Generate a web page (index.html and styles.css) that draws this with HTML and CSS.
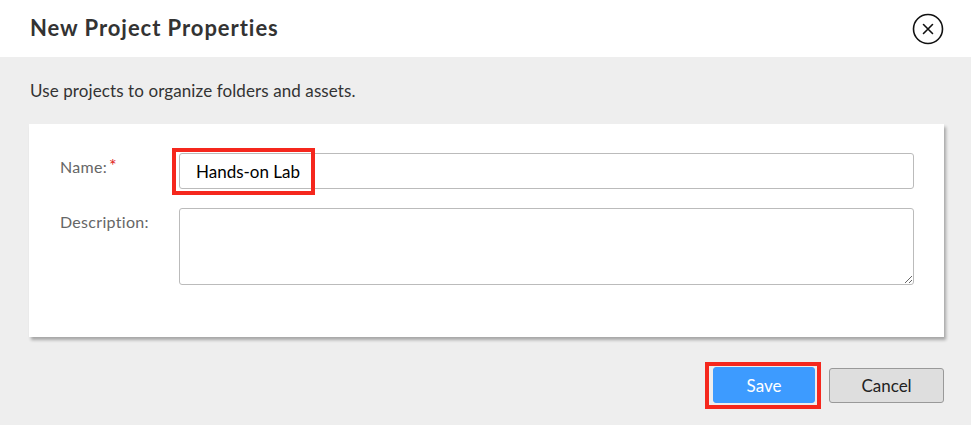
FILE: index.html
```html
<!DOCTYPE html>
<html>
<head>
<meta charset="utf-8">
<link rel="stylesheet" href="styles.css">
</head>
<body>
<div class="dialog">
  <header class="head">
    <h1 class="title">New Project Properties</h1>
    <button class="close" aria-label="Close">
      <svg width="32" height="32" viewBox="0 0 32 32"><circle cx="16" cy="16" r="14.5" fill="none" stroke="#111" stroke-width="1.6"/><path d="M11.5 11.5 L20.5 20.5 M20.5 11.5 L11.5 20.5" stroke="#111" stroke-width="1.6" stroke-linecap="round"/></svg>
    </button>
  </header>
  <main class="body">
    <p class="intro">Use projects to organize folders and assets.</p>
    <section class="card">
      <div class="row">
        <label class="label">Name:<span class="req">*</span></label>
        <div class="field">
          <input class="input" type="text" value="Hands-on Lab">
          <span class="hl hl-name"></span>
        </div>
      </div>
      <div class="row">
        <label class="label">Description:</label>
        <div class="field">
          <textarea class="textarea"></textarea>
        </div>
      </div>
    </section>
    <div class="actions">
      <div class="btnwrap">
        <button class="btn save">Save</button>
      </div>
      <button class="btn cancel">Cancel</button>
    </div>
  </main>
</div>
</body>
</html>
```
FILE: styles.css
```css
* { box-sizing: border-box; }
html, body { margin: 0; padding: 0; }
body {
  width: 971px;
  height: 425px;
  overflow: hidden;
  font-family: "Lato", "Open Sans", sans-serif;
  background: #eeeeee;
}
.dialog { display: flex; flex-direction: column; height: 425px; }
.head {
  height: 57px;
  background: #fff;
  display: flex;
  align-items: center;
  justify-content: space-between;
  padding: 0 27px 0 30px;
}
.title {
  margin: 0;
  font-size: 22px;
  font-weight: 700;
  color: #333;
  letter-spacing: 0.95px;
  padding-bottom: 2px;
}
.close {
  border: 0;
  background: none;
  padding: 0;
  width: 32px;
  height: 32px;
  display: flex;
}
.body {
  flex: 1;
  background: #eeeeee;
  padding: 22px 27px 0 29px;
}
.intro {
  margin: 0 0 0 1px;
  font-size: 17px;
  color: #333;
  line-height: 24px;
  letter-spacing: 0.1px;
}
.card {
  margin-top: 21px;
  width: 915px;
  height: 213px;
  background: #fff;
  box-shadow: 2px 3px 3px rgba(0,0,0,0.3);
  padding: 29px 30px 0 31px;
}
.row { display: flex; }
.row + .row { margin-top: 19px; }
.label {
  width: 119px;
  font-size: 16px;
  color: #666;
  padding-top: 4px;
  letter-spacing: 0.3px;
}
.req {
  color: #e0201a;
  margin-left: 2px;
  font-size: 18px;
  vertical-align: top;
  position: relative;
  top: -3px;
}
.field { position: relative; flex: 1; display: flex; }
.input {
  width: 735px;
  height: 36px;
  border: 1px solid #bbb;
  border-radius: 3px;
  padding: 0 0 0 16px;
  font-family: inherit;
  font-size: 17px;
  color: #000;
  outline: none;
}
.textarea {
  width: 735px;
  height: 77px;
  border: 1px solid #bbb;
  border-radius: 3px;
  font-family: inherit;
  resize: both;
  outline: none;
}
.hl {
  position: absolute;
  border: 4px solid #f5271d;
  pointer-events: none;
}
.hl-name { left: -7px; top: -5px; width: 143px; height: 47px; }
.actions {
  display: flex;
  justify-content: flex-end;
  align-items: center;
  gap: 8px;
  margin-top: 25px;
  padding-right: 0;
}
.btnwrap {
  border: 4px solid #f5271d;
  padding: 1px 2px 2px 4px;
  display: flex;
}
.btn {
  height: 36px;
  border-radius: 3px;
  font-family: inherit;
  font-size: 17px;
  padding: 0;
}
.save {
  width: 102px;
  background: #3d9bff;
  color: #fff;
  border: 1px solid #3d9bff;
}
.cancel {
  width: 115px;
  height: 35px;
  background: #dedede;
  color: #222;
  border: 1px solid #999;
}
```
